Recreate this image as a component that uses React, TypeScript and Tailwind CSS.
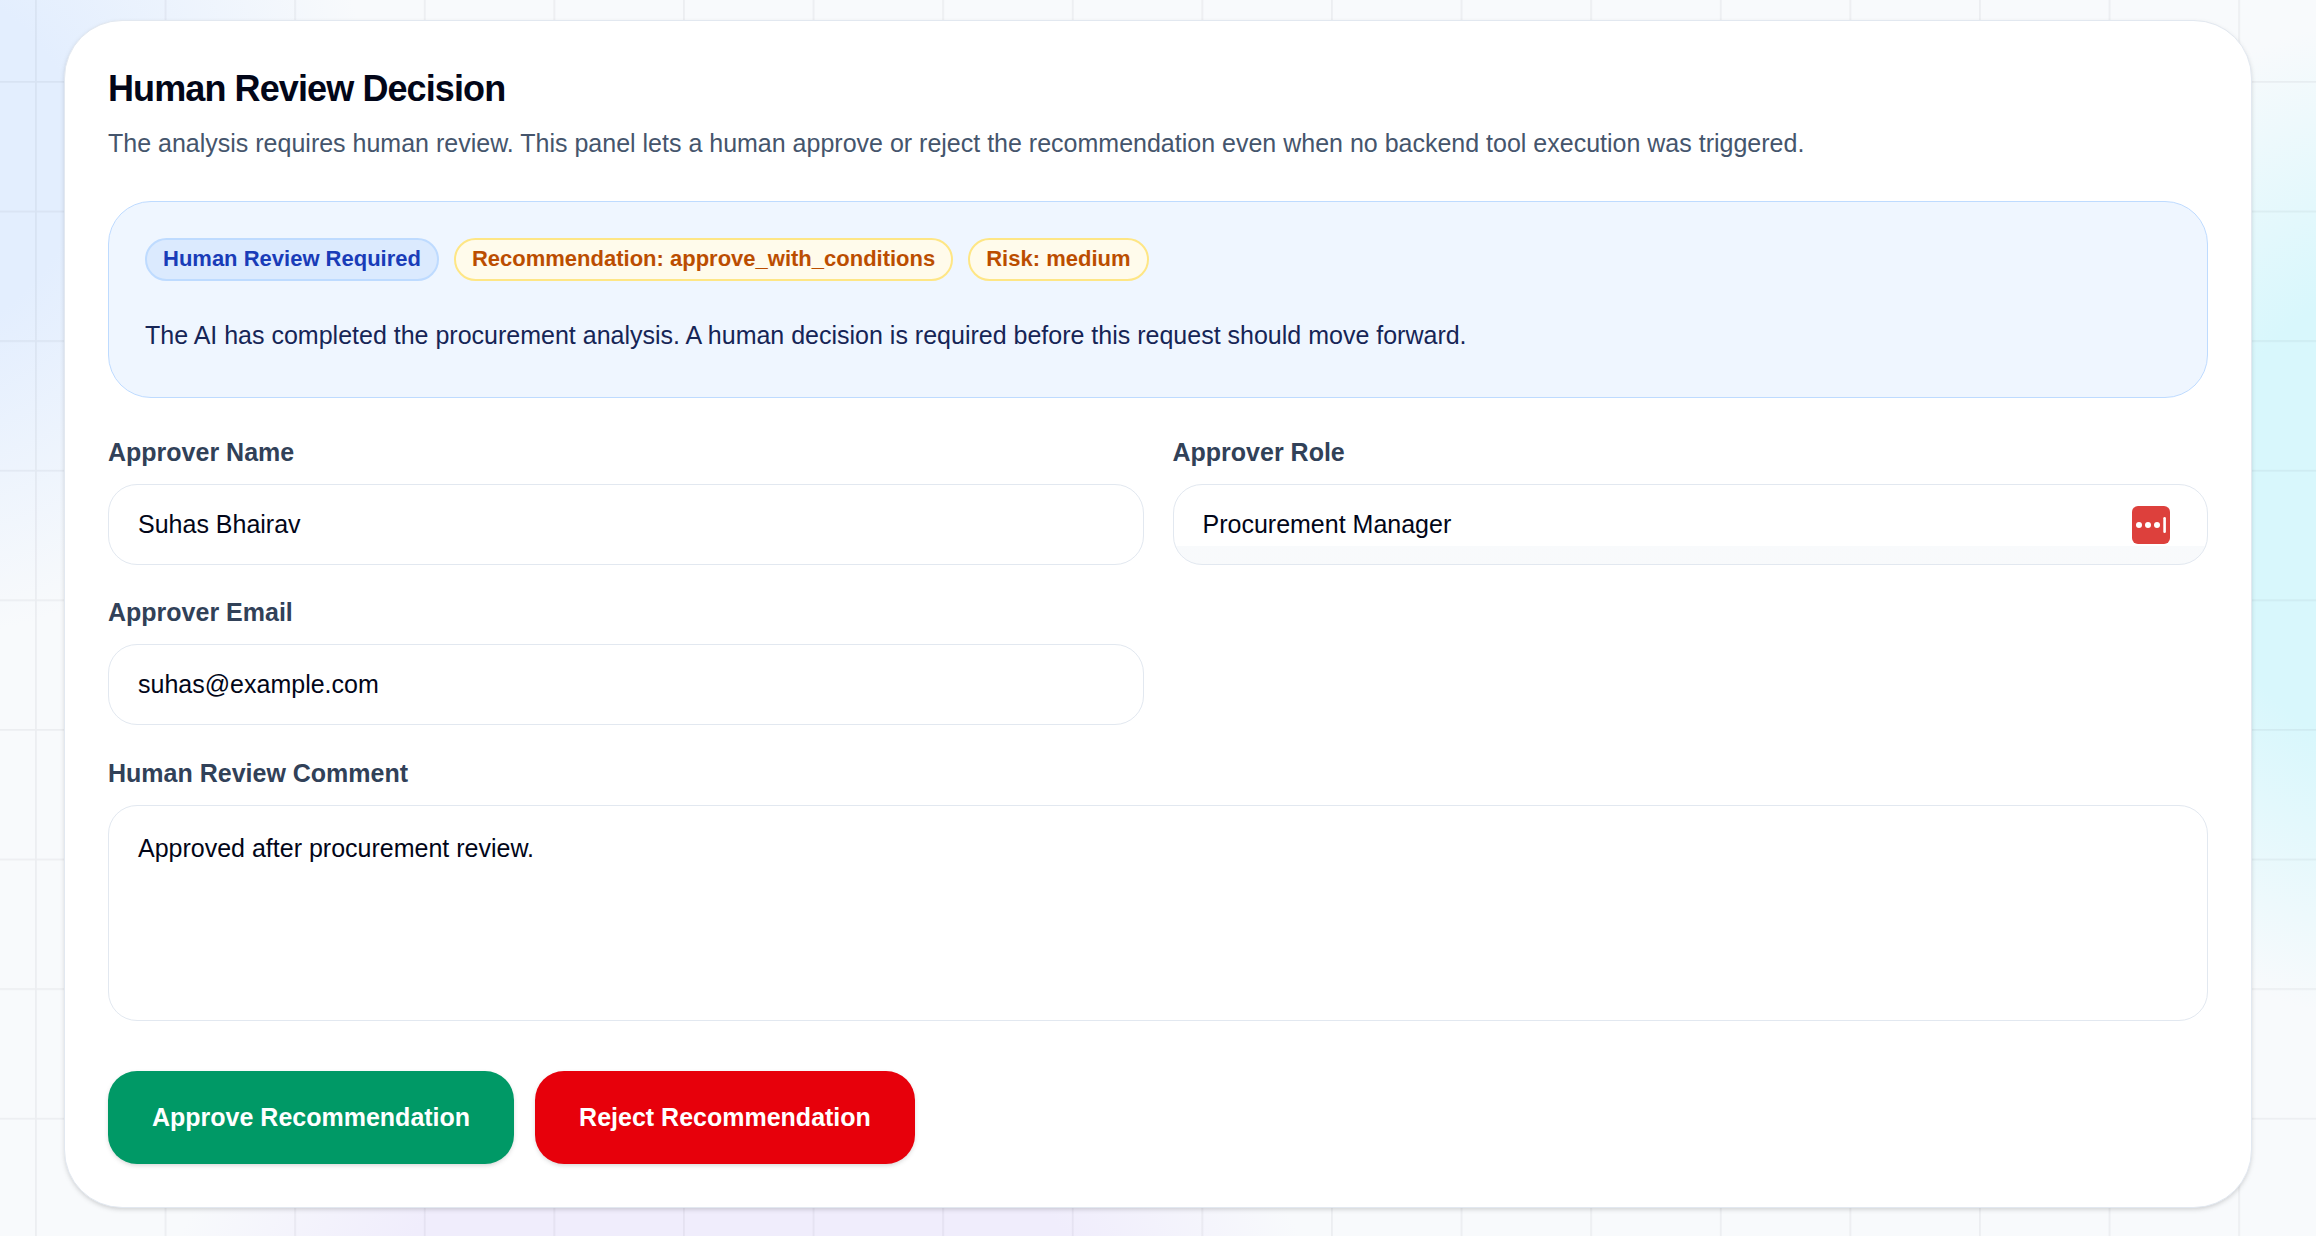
import { useState } from "react";
import type { ReactNode } from "react";

const fieldClass =
  "block w-full rounded-[29px] border border-slate-200 px-[29px] text-[25px] text-slate-950 outline-none focus:border-blue-400";

const pillTones = {
  blue: "border-blue-200 bg-blue-100 text-blue-800",
  amber: "border-amber-200 bg-amber-50 text-amber-700",
};

function Pill({ tone, children }: { tone: keyof typeof pillTones; children: ReactNode }) {
  return (
    <span
      className={`inline-flex items-center rounded-full border-2 px-4 pt-1 pb-[6px] text-[22px] leading-[29px] font-bold ${pillTones[tone]}`}
    >
      {children}
    </span>
  );
}

function Field({ id, label, children }: { id: string; label: string; children: ReactNode }) {
  return (
    <div>
      <label htmlFor={id} className="block text-[25px] leading-9 font-bold text-slate-700">
        {label}
      </label>
      <div className="mt-[14px]">{children}</div>
    </div>
  );
}

function PasswordManagerIcon() {
  return (
    <svg viewBox="0 0 38 38" className="h-[38px] w-[38px]" aria-hidden="true">
      <rect width="38" height="38" rx="6" fill="#dd403c" />
      <circle cx="7" cy="19" r="3" fill="#fff" />
      <circle cx="16" cy="19" r="3" fill="#fff" />
      <circle cx="25" cy="19" r="3" fill="#fff" />
      <rect x="31.3" y="11" width="2.6" height="16" rx="1.3" fill="#fff" />
    </svg>
  );
}

function GridPattern() {
  return (
    <svg className="absolute inset-0 -z-10 h-full w-full" aria-hidden="true">
      <defs>
        <pattern
          id="grid"
          width="72"
          height="72"
          patternUnits="userSpaceOnUse"
          patternTransform="translate(35 81) scale(1.8)"
        >
          <path d="M72 0.5H0.5V72" fill="none" stroke="#0f172a" strokeOpacity="0.05" />
        </pattern>
      </defs>
      <rect width="100%" height="100%" fill="url(#grid)" />
    </svg>
  );
}

function ReviewPanel() {
  const [name, setName] = useState("Suhas Bhairav");
  const [role, setRole] = useState("Procurement Manager");
  const [email, setEmail] = useState("suhas@example.com");
  const [comment, setComment] = useState("Approved after procurement review.");

  return (
    <section className="rounded-[58px] border border-slate-200 bg-white p-[43px] shadow-[0_2px_5px_rgba(0,0,0,0.1),0_2px_4px_-2px_rgba(0,0,0,0.1)]">
      <h2 className="text-4xl leading-[50px] font-bold tracking-tight text-slate-950">Human Review Decision</h2>
      <p className="mt-2 text-[25px] leading-[43px] text-slate-600">
        The analysis requires human review. This panel lets a human approve or reject the recommendation even when no
        backend tool execution was triggered.
      </p>

      <div className="mt-9 rounded-[43px] border border-blue-200 bg-blue-50 p-9">
        <div className="flex flex-wrap gap-[15px]">
          <Pill tone="blue">Human Review Required</Pill>
          <Pill tone="amber">Recommendation: approve_with_conditions</Pill>
          <Pill tone="amber">Risk: medium</Pill>
        </div>
        <p className="mt-[29px] text-[25px] leading-[51px] text-blue-950">
          The AI has completed the procurement analysis. A human decision is required before this request should move
          forward.
        </p>
      </div>

      <form onSubmit={(event) => event.preventDefault()}>
        <div className="mt-9 grid gap-[29px] md:grid-cols-2">
          <Field id="approver-name" label="Approver Name">
            <input
              id="approver-name"
              className={`${fieldClass} h-[81px] bg-white`}
              value={name}
              onChange={(event) => setName(event.target.value)}
            />
          </Field>
          <Field id="approver-role" label="Approver Role">
            <div className="relative">
              <input
                id="approver-role"
                className={`${fieldClass} h-[81px] bg-linear-to-b from-white from-77% to-slate-50 to-77%`}
                value={role}
                onChange={(event) => setRole(event.target.value)}
              />
              <button type="button" aria-label="Fill from password manager" className="absolute top-[22px] right-[38px]">
                <PasswordManagerIcon />
              </button>
            </div>
          </Field>
          <Field id="approver-email" label="Approver Email">
            <input
              id="approver-email"
              type="email"
              className={`${fieldClass} h-[81px] bg-white`}
              value={email}
              onChange={(event) => setEmail(event.target.value)}
            />
          </Field>
        </div>

        <div className="mt-[30px]">
          <Field id="review-comment" label="Human Review Comment">
            <textarea
              id="review-comment"
              rows={4}
              className={`${fieldClass} resize-none bg-white py-[21px] leading-[43px]`}
              value={comment}
              onChange={(event) => setComment(event.target.value)}
            />
          </Field>
        </div>

        <div className="mt-[50px] flex flex-wrap gap-[21px]">
          <button
            type="button"
            className="rounded-[29px] bg-emerald-600 px-11 py-[25px] text-[25px] leading-[43px] font-bold text-white shadow-[0_2px_5px_rgba(0,0,0,0.1),0_2px_4px_-2px_rgba(0,0,0,0.1)]"
          >
            Approve Recommendation
          </button>
          <button
            type="button"
            className="rounded-[29px] bg-red-600 px-11 py-[25px] text-[25px] leading-[43px] font-bold text-white shadow-[0_2px_5px_rgba(0,0,0,0.1),0_2px_4px_-2px_rgba(0,0,0,0.1)]"
          >
            Reject Recommendation
          </button>
        </div>
      </form>
    </section>
  );
}

export default function App() {
  return (
    <main className="relative isolate min-h-screen overflow-hidden bg-slate-50 px-16 pt-5 pb-[27px] font-['Liberation_Sans',Arial,sans-serif]">
      {/* soft colour glows behind the grid */}
      <div className="absolute inset-0 -z-10 bg-[radial-gradient(circle_at_-100px_160px,#e3eefe_0,#e3eefe_180px,transparent_480px),radial-gradient(circle_at_2450px_520px,#d8f7fc_0,#d8f7fc_250px,transparent_510px),radial-gradient(circle_at_740px_1500px,#f0edfc_0,#f0edfc_420px,transparent_620px)]" />
      <GridPattern />
      <ReviewPanel />
    </main>
  );
}
